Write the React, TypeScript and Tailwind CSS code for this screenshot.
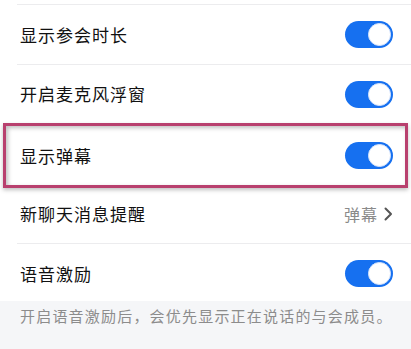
import React from 'react';

const font = { fontFamily: "'Noto Sans CJK SC', 'Noto Sans', sans-serif" };

const Toggle: React.FC = () => (
  <div className="w-[48px] h-[27px] rounded-full bg-[#1670f0] flex items-center justify-end pr-[2px]">
    <div className="w-[23px] h-[23px] rounded-full bg-white border border-[#d6e4fb]" />
  </div>
);

const Divider: React.FC = () => <div className="ml-[17px] h-px bg-[#ececee]" />;

const Row: React.FC<{ label: string; right?: React.ReactNode; className?: string }> = ({
  label,
  right,
  className = '',
}) => (
  <div className={`flex items-center justify-between pl-[20px] pr-[18px] ${className}`}>
    <span className="text-[17px] tracking-[1px] text-[#111]">{label}</span>
    {right ?? <Toggle />}
  </div>
);

const App: React.FC = () => {
  return (
    <div className="w-[411px] h-[349px] bg-white overflow-hidden flex flex-col" style={font}>
      <div className="h-[4px]" />
      <Divider />
      <Row label="显示参会时长" className="h-[59px]" />
      <Divider />
      <Row label="开启麦克风浮窗" className="h-[58px]" />
      <div className="mx-[3px] h-[65px] border-[3px] border-[#b8406e] shadow-[inset_2px_2px_4px_rgba(0,0,0,0.25),0_2px_4px_rgba(0,0,0,0.25)] flex items-center justify-between pl-[14px] pr-[12px]">
        <span className="text-[17px] tracking-[1px] text-[#111]">显示弹幕</span>
        <Toggle />
      </div>
      <Row
        label="新聊天消息提醒"
        className="h-[55px] pb-[4px]"
        right={
          <span className="flex items-center gap-[6px] text-[16px] tracking-[1px] text-[#8a8a8a]">
            弹幕
            <svg width="9" height="14" viewBox="0 0 9 14" fill="none">
              <path d="M1.5 1.5 L7 7 L1.5 12.5" stroke="#555" strokeWidth="2" strokeLinecap="round" strokeLinejoin="round" />
            </svg>
          </span>
        }
      />
      <Divider />
      <Row label="语音激励" className="h-[57px] pt-[2px]" />
      <div className="flex-1 bg-[#f5f6f8] pl-[20px] pt-[4px]">
        <p className="text-[15px] tracking-[1.2px] text-[#8c8c8c] whitespace-nowrap">
          开启语音激励后，会优先显示正在说话的与会成员。
        </p>
      </div>
    </div>
  );
};

export default App;
